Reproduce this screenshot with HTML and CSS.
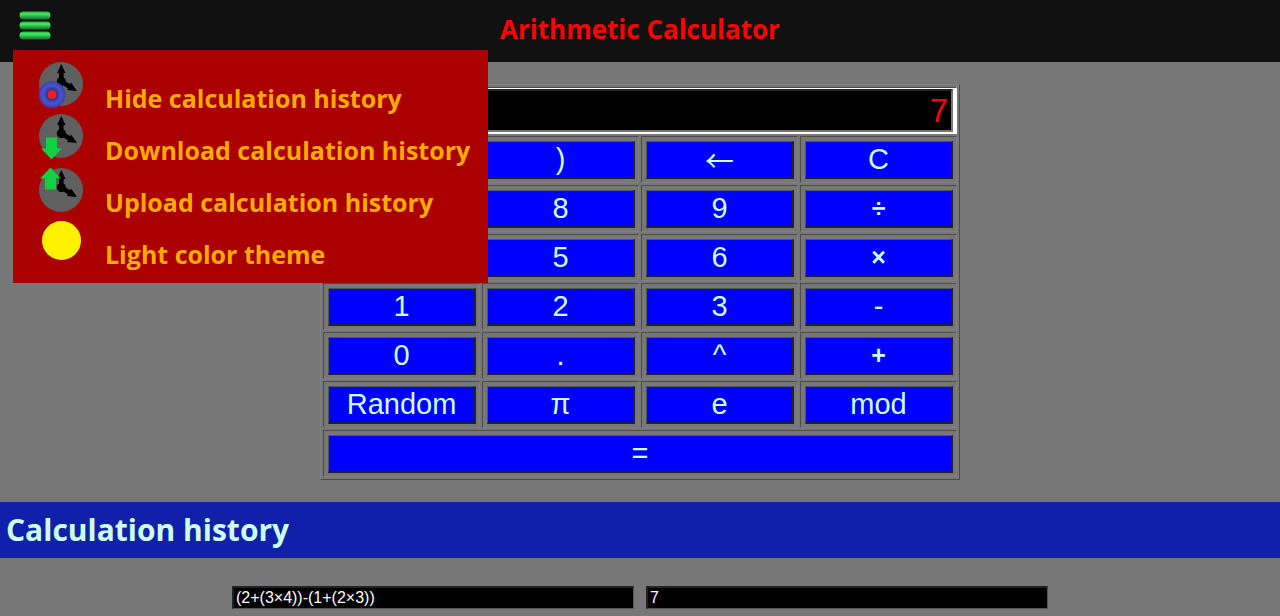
FILE: index.html
```html
<!DOCTYPE html>
<html lang="en">
<head>
<meta charset="utf-8">
<meta name="viewport" content="width=device-width, initial-scale=1">
<title>Arithmetic Calculator</title>
<link rel="stylesheet" href="styles.css">
</head>
<body>
<svg class="defs" width="0" height="0" aria-hidden="true">
  <defs>
    <linearGradient id="bar" x1="0" y1="0" x2="0" y2="1">
      <stop offset="0" stop-color="#27a243"/>
      <stop offset=".3" stop-color="#3df25f"/>
      <stop offset=".6" stop-color="#2cb549"/>
      <stop offset="1" stop-color="#1c6a2a"/>
    </linearGradient>
    <radialGradient id="ring">
      <stop offset=".3" stop-color="#2d2f80"/>
      <stop offset=".68" stop-color="#4c53d2"/>
      <stop offset="1" stop-color="#3a40ac"/>
    </radialGradient>
    <symbol id="clock" viewBox="0 0 46 52">
      <circle cx="23" cy="26" r="22" fill="#606060"/>
      <circle cx="23.300" cy="23.500" r="4.500"/>
      <path d="M23.300 24V12M23.300 23.500L34 30" stroke="#000" stroke-width="4.600"/>
      <path d="M23.300 6L27.500 15H19.100zM39 33L29 32L33 24.500z"/>
    </symbol>
  </defs>
</svg>
<header class="header">
  <button class="menu-button" type="button" aria-label="Menu" aria-expanded="true">
    <svg width="32" height="30" viewBox="0 0 32 30">
      <rect x=".5" y="1.500" width="31" height="8" rx="4" fill="url(#bar)"/>
      <rect x=".5" y="11.500" width="31" height="8" rx="4" fill="url(#bar)"/>
      <rect x=".5" y="21.500" width="31" height="8" rx="4" fill="url(#bar)"/>
    </svg>
  </button>
  <h1 class="title">Arithmetic Calculator</h1>
  <nav class="menu">
    <button class="menu-item" type="button">
      <svg width="46" height="52" viewBox="0 0 46 52">
        <use href="#clock" width="46" height="52"/>
        <circle cx="14" cy="36.500" r="13.300" fill="url(#ring)"/>
        <circle cx="14" cy="36.500" r="4.500" fill="#f01c24"/>
      </svg>
      <span class="menu-label">Hide calculation history</span>
    </button>
    <button class="menu-item" type="button">
      <svg width="46" height="52" viewBox="0 0 46 52">
        <use href="#clock" width="46" height="52"/>
        <path d="M8 27.500H19V38.500H24L13.500 49.500L3 38.500H8z" fill="#12d044"/>
      </svg>
      <span class="menu-label">Download calculation history</span>
    </button>
    <button class="menu-item" type="button">
      <svg width="46" height="52" viewBox="0 0 46 52">
        <use href="#clock" y="2" width="46" height="52"/>
        <path d="M7 27.500H18V16.500H23L12.500 5.500L2 16.500H7z" fill="#12d044"/>
      </svg>
      <span class="menu-label">Upload calculation history</span>
    </button>
    <button class="menu-item" type="button">
      <svg width="46" height="52" viewBox="0 0 46 52">
        <circle cx="23.500" cy="26.500" r="19.500" fill="#fff200"/>
      </svg>
      <span class="menu-label">Light color theme</span>
    </button>
  </nav>
</header>
<main>
  <form class="calculator">
    <div class="cell wide screen"><input class="display" type="text" value="7" aria-label="Expression"></div>
    <div class="cell"><button class="key" type="button">(</button></div>
    <div class="cell"><button class="key" type="button">)</button></div>
    <div class="cell"><button class="key arrow" type="button" aria-label="Backspace">←</button></div>
    <div class="cell"><button class="key" type="button">C</button></div>
    <div class="cell"><button class="key" type="button">7</button></div>
    <div class="cell"><button class="key" type="button">8</button></div>
    <div class="cell"><button class="key" type="button">9</button></div>
    <div class="cell"><button class="key operator" type="button">÷</button></div>
    <div class="cell"><button class="key" type="button">4</button></div>
    <div class="cell"><button class="key" type="button">5</button></div>
    <div class="cell"><button class="key" type="button">6</button></div>
    <div class="cell"><button class="key operator" type="button">×</button></div>
    <div class="cell"><button class="key" type="button">1</button></div>
    <div class="cell"><button class="key" type="button">2</button></div>
    <div class="cell"><button class="key" type="button">3</button></div>
    <div class="cell"><button class="key" type="button">-</button></div>
    <div class="cell"><button class="key" type="button">0</button></div>
    <div class="cell"><button class="key" type="button">.</button></div>
    <div class="cell"><button class="key" type="button">^</button></div>
    <div class="cell"><button class="key operator" type="button">+</button></div>
    <div class="cell"><button class="key" type="button">Random</button></div>
    <div class="cell"><button class="key" type="button">π</button></div>
    <div class="cell"><button class="key" type="button">e</button></div>
    <div class="cell"><button class="key" type="button">mod</button></div>
    <div class="cell wide"><button class="key" type="button">=</button></div>
  </form>
  <section>
    <h2 class="history-title">Calculation history</h2>
    <div class="history-row">
      <input class="record" type="text" value="(2+(3×4))-(1+(2×3))" aria-label="Past expression" readonly>
      <input class="record" type="text" value="7" aria-label="Past result" readonly>
    </div>
  </section>
</main>
</body>
</html>
```
FILE: styles.css
```css
* {
  box-sizing: border-box;
}

body {
  margin: 0;
  background: #777;
  font-family: "Open Sans", "Noto Sans", sans-serif;
}

.defs {
  display: block;
}

.header {
  position: relative;
  display: grid;
  grid-template-columns: 1fr auto 1fr;
  align-items: center;
  height: 62px;
  background: #111;
}

.menu-button {
  justify-self: start;
  margin: 0 0 12px 19px;
  padding: 0;
  border: 0;
  background: none;
  line-height: 0;
}

.title {
  margin: 0;
  padding-bottom: 4px;
  color: #f00;
  font-size: 26px;
  line-height: 36px;
}

.menu {
  position: absolute;
  z-index: 1;
  top: 50px;
  left: 13px;
  width: 475px;
  padding: 8px 0 17px 25px;
  background: #a00;
}

.menu-item {
  display: flex;
  align-items: flex-end;
  gap: 21px;
  height: 52px;
  padding: 0;
  border: 0;
  background: none;
  color: #fa0;
  font: bold 25px/24px "Open Sans", "Noto Sans", sans-serif;
  white-space: nowrap;
}

.calculator {
  display: grid;
  grid-template-columns: repeat(4, minmax(0, 1fr));
  gap: 2px;
  width: 50%;
  min-width: 480px;
  margin: 22px auto;
  padding: 2px;
  border: 1px solid;
  border-color: #808080 #4c4c4c #4c4c4c #808080;
}

.cell {
  height: 47px;
  padding: 4px 3px 4px 4px;
  border: 1px solid;
  border-color: #4c4c4c #808080 #808080 #4c4c4c;
}

.wide {
  grid-column: 1 / -1;
}

.screen {
  padding: 1px 3px 2px;
  border-color: #4c4c4c #fff #fff #4c4c4c;
  background: #fff;
}

.display {
  display: block;
  width: 100%;
  height: 43px;
  padding: 0 3px;
  border: 2px inset #767676;
  background: #000;
  color: #f00;
  font: 33px "Liberation Sans", Arial, sans-serif;
  text-align: right;
}

.key {
  display: block;
  width: 100%;
  height: 38px;
  padding: 0 0 1px;
  border: solid;
  border-width: 1px 2px 2px 1px;
  border-color: #555 #222 #222 #555;
  background: #00f;
  color: #cfe;
  font: 29px/32px "Liberation Sans", Arial, sans-serif;
}

.arrow {
  font-family: "Noto Sans CJK SC", sans-serif;
}

.operator {
  font-size: 25px;
  font-weight: bold;
}

.history-title {
  margin: 0;
  padding: 8px 6px;
  background: #1020aa;
  color: #cfe;
  font-size: 30px;
  line-height: 40px;
}

.history-row {
  display: flex;
  justify-content: center;
  gap: 12px;
  padding: 28px 16px 7px;
}

.record {
  width: 402px;
  height: 23px;
  padding: 0 2px;
  border: 2px solid;
  border-width: 2px 1px 1px 2px;
  border-color: #222 #555 #555 #222;
  background: #000;
  color: #fff;
  font: 16px "Liberation Sans", Arial, sans-serif;
}
```
